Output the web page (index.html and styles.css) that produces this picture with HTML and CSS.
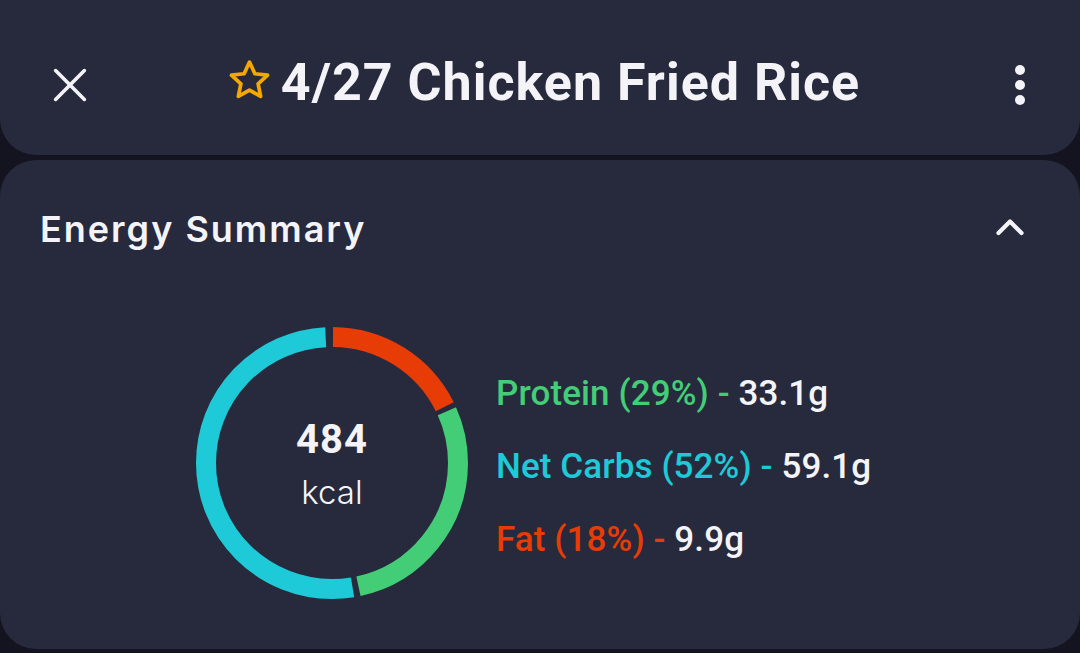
FILE: index.html
```html
<!DOCTYPE html>
<html>
<head>
<meta charset="utf-8">
<link rel="stylesheet" href="styles.css">
</head>
<body>
<div class="page">
  <header class="topbar">
    <button class="icon-btn close" aria-label="Close">
      <svg width="40" height="40" viewBox="0 0 40 40"><path d="M4 4 L36 36 M36 4 L4 36" stroke="#f4f4f8" stroke-width="4" stroke-linecap="round" fill="none"/></svg>
    </button>
    <h1 class="title">
      <svg class="star" width="44" height="44" viewBox="0 0 24 24"><path d="M12 2.6 L14.75 8.55 L21.2 9.3 L16.4 13.7 L17.7 20.1 L12 16.9 L6.3 20.1 L7.6 13.7 L2.8 9.3 L9.25 8.55 Z" fill="none" stroke="#f5a800" stroke-width="1.9" stroke-linejoin="round"/></svg>
      <span>4/27 Chicken Fried Rice</span>
    </h1>
    <button class="icon-btn menu" aria-label="More">
      <span class="dot"></span><span class="dot"></span><span class="dot"></span>
    </button>
  </header>

  <section class="card">
    <div class="card-head">
      <h2 class="card-title">Energy Summary</h2>
      <svg class="chevron" width="28" height="18" viewBox="0 0 28 18"><path d="M2.5 15 L14 3.5 L25.5 15" stroke="#f4f4f8" stroke-width="4.2" stroke-linecap="round" stroke-linejoin="round" fill="none"/></svg>
    </div>
    <div class="summary">
      <div class="donut">
        <svg width="272" height="272" viewBox="0 0 272 272">
          <g transform="rotate(-90 136 136)">
            <circle cx="136" cy="136" r="126" fill="none" stroke="#e83c06" stroke-width="20" stroke-dasharray="138.5 1000" stroke-dashoffset="-1"/>
            <circle cx="136" cy="136" r="126" fill="none" stroke="#43cd77" stroke-width="20" stroke-dasharray="224.5 1000" stroke-dashoffset="-144.5"/>
            <circle cx="136" cy="136" r="126" fill="none" stroke="#1ec9d8" stroke-width="20" stroke-dasharray="410 1000" stroke-dashoffset="-375"/>
          </g>
        </svg>
        <div class="donut-center">
          <div class="kcal-num">484</div>
          <div class="kcal-unit">kcal</div>
        </div>
      </div>
      <ul class="legend">
        <li><span class="protein">Protein (29%) -</span> 33.1g</li>
        <li><span class="carbs">Net Carbs (52%) -</span> 59.1g</li>
        <li><span class="fat">Fat (18%) -</span> 9.9g</li>
      </ul>
    </div>
  </section>
</div>
</body>
</html>
```

FILE: styles.css
```css
* { box-sizing: border-box; }
html, body {
  margin: 0;
  padding: 0;
  background: #13141f;
  width: 1080px;
  height: 653px;
  overflow: hidden;
}
.page {
  display: flex;
  flex-direction: column;
  gap: 5px;
  font-family: Roboto, "Liberation Sans", sans-serif;
  color: #f4f4f8;
}
.topbar {
  height: 155px;
  background: #262a3c;
  border-radius: 0 0 36px 36px;
  display: flex;
  align-items: center;
  padding: 0 38px 0 48px;
  position: relative;
}
.icon-btn {
  background: none;
  border: 0;
  padding: 0;
  display: flex;
  align-items: center;
  justify-content: center;
}
.close {
  width: 44px;
  height: 44px;
  margin-top: 15px;
}
.close svg { width: 36px; height: 36px; }
.title {
  flex: 1;
  margin: 10px 0 0 0;
  display: flex;
  align-items: center;
  justify-content: center;
  gap: 8px;
  font-size: 52px;
  font-weight: 700;
  letter-spacing: 1px;
  padding-right: 4px;
}
.star { width: 47px; height: 47px; margin-top: -4px; }
.menu {
  width: 44px;
  flex-direction: column;
  gap: 5px;
  margin-top: 15px;
}
.dot {
  width: 10px;
  height: 10px;
  border-radius: 50%;
  background: #f4f4f8;
}
.card {
  height: 489px;
  background: #262a3c;
  border-radius: 36px;
  padding: 0 56px 0 40px;
}
.card-head {
  height: 138px;
  display: flex;
  align-items: center;
  justify-content: space-between;
}
.card-title {
  margin: 0;
  font-family: Inter, "Open Sans", sans-serif;
  font-weight: 600;
  font-size: 36px;
  letter-spacing: 2px;
  color: #f4f4f8;
}
.chevron { margin-top: -4px; }
.summary {
  display: flex;
  align-items: center;
  padding-left: 156px;
  margin-top: 29px;
}
.donut {
  width: 272px;
  height: 272px;
  position: relative;
}
.donut svg { display: block; }
.donut-center {
  position: absolute;
  inset: 0;
  display: flex;
  flex-direction: column;
  align-items: center;
  justify-content: center;
  padding-top: 10px;
}
.kcal-num {
  font-size: 40px;
  font-weight: 700;
  line-height: 48px;
  letter-spacing: 1px;
}
.kcal-unit {
  font-family: Inter, "Open Sans", sans-serif;
  font-size: 33px;
  font-weight: 300;
  line-height: 56px;
}
.legend {
  list-style: none;
  margin: 6px 0 0 28px;
  padding: 0;
  display: flex;
  flex-direction: column;
  font-size: 35px;
  font-weight: 500;
  letter-spacing: 0.1px;
}
.legend li { line-height: 73px; }
.protein { color: #43cd77; }
.carbs { color: #1ec9d8; }
.fat { color: #e83c06; }
```
